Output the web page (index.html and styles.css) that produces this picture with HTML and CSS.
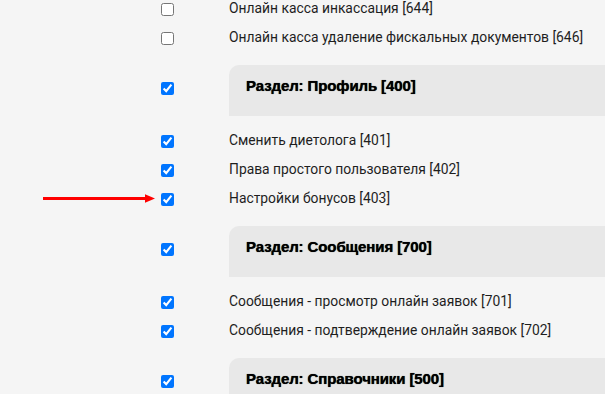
FILE: index.html
```html
<!DOCTYPE html>
<html lang="ru">
    <head>
        <meta charset="UTF-8" />
        <meta name="viewport" content="width=device-width, initial-scale=1.0" />
        <title>Права доступа</title>

        <link rel="stylesheet" href="styles.css">
    </head>
    <body>
        <div class="rights-list">
            <div class="item">
                <div class="check"><input type="checkbox" /></div>
                <div class="label">Онлайн касса инкассация [644]</div>
            </div>
            <div class="item">
                <div class="check"><input type="checkbox" /></div>
                <div class="label">Онлайн касса удаление фискальных документов [646]</div>
            </div>

            <div class="section">
                <div class="check"><input type="checkbox" checked /></div>
                <div class="section-title">Раздел: Профиль [400]</div>
            </div>
            <div class="item">
                <div class="check"><input type="checkbox" checked /></div>
                <div class="label">Сменить диетолога [401]</div>
            </div>
            <div class="item">
                <div class="check"><input type="checkbox" checked /></div>
                <div class="label">Права простого пользователя [402]</div>
            </div>
            <div class="item">
                <svg class="pointer" width="113" height="9" viewBox="0 0 113 9">
                    <rect x="0" y="3" width="104" height="3" fill="#ff0000" />
                    <polygon points="102,0.3 112,4.5 102,8.7" fill="#ff0000" />
                </svg>
                <div class="check"><input type="checkbox" checked /></div>
                <div class="label">Настройки бонусов [403]</div>
            </div>

            <div class="section">
                <div class="check"><input type="checkbox" checked /></div>
                <div class="section-title">Раздел: Сообщения [700]</div>
            </div>
            <div class="item">
                <div class="check"><input type="checkbox" checked /></div>
                <div class="label">Сообщения - просмотр онлайн заявок [701]</div>
            </div>
            <div class="item">
                <div class="check"><input type="checkbox" checked /></div>
                <div class="label">Сообщения - подтверждение онлайн заявок [702]</div>
            </div>

            <div class="section">
                <div class="check"><input type="checkbox" checked /></div>
                <div class="section-title">Раздел: Справочники [500]</div>
            </div>
        </div>
    </body>
</html>
```

FILE: styles.css
```css
* {
    font-family: Roboto, "Liberation Sans", Arial, sans-serif;
}
body {
    margin: 0;
    background: #f5f5f5;
    color: #1e1e1e;
    overflow: hidden;
}
.rights-list {
    margin-top: -5px;
}
.item,
.section {
    display: grid;
    grid-template-columns: 229px 1fr;
    position: relative;
}
.item {
    height: 29px;
    align-items: center;
}
.check {
    padding-left: 161px;
    line-height: 0;
}
.check input {
    margin: 0;
    width: 13px;
    height: 13px;
}
.label {
    font-size: 13.85px;
    margin-top: -3px;
}
.section {
    margin: 12px 0 11px;
}
.section .check {
    padding-top: 17px;
}
.section-title {
    height: 51px;
    box-sizing: border-box;
    padding: 12px 17px 0;
    background: #e8e8e8;
    border-top-left-radius: 10px;
    font-family: "Liberation Sans", Arial, sans-serif;
    font-weight: bold;
    font-size: 15px;
    letter-spacing: -0.1px;
    color: #000;
    text-shadow: 0 0 0.7px #000;
}
.pointer {
    position: absolute;
    left: 43px;
    top: 9px;
}
```
